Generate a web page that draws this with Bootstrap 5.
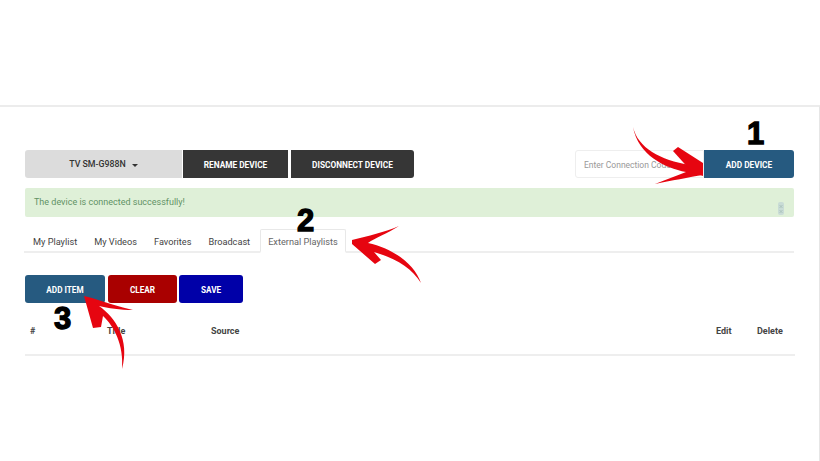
<!DOCTYPE html>
<html lang="en">
<head>
<meta charset="utf-8">
<title>Device playlists</title>
<link href="https://cdn.jsdelivr.net/npm/bootstrap@5.3.0/dist/css/bootstrap.min.css" rel="stylesheet">
<style>
html,body{height:461px;overflow:hidden;background:#fff}
body{font-family:Roboto,"Liberation Sans",sans-serif;font-size:9.5px;color:#444;position:relative}
.panel-wrap{margin-top:105px;height:356px;border-top:2px solid #ececec;border-right:1px solid #e6e6e6;padding:43px 25px 0 25px}
.bar-btn{height:28px;border-radius:0;border:0;font-size:8.3px;font-weight:700;color:#fff;padding:2px 0 0;display:flex;align-items:center;justify-content:center;text-transform:uppercase}
.bar-dev{width:157px;background:#dcdcdc;color:#333;font-size:8.8px;font-weight:500;border-radius:3px 0 0 3px;text-transform:none;margin-right:1px}
.bar-dev::after{content:"";margin-left:6px;border-top:3px solid #333;border-left:3px solid transparent;border-right:3px solid transparent}
.bar-dark{background:#363636}
.bar-ren{width:105px;margin-right:3px}
.bar-dis{width:123px;border-radius:0 3px 3px 0}
.conn-input{width:129px;height:28px;border:1px solid #eee;border-radius:3px 0 0 3px;font-size:8.5px;color:#999;padding:2px 8px 0;display:flex;align-items:center}
.bar-add{width:90px;background:#265a80;border-radius:0 3px 3px 0}
.ok-alert{height:29px;margin-top:10px;background:#dff0d8;color:#5f9265;font-size:9px;padding:0 9px;border:0;border-radius:2px;margin-bottom:0}
.alert-glyph{width:6px;height:13px;margin-top:11px;margin-right:1px}
.tab-row{margin-top:12px;margin-left:-1px;height:24px;border-bottom:2px solid #eee;font-size:9.2px;color:#444}
.tab-item{padding:2px 8px 0 9px;height:24px;display:flex;align-items:center}
.tab-on{color:#666;padding:2px 7px 0;border:1px solid #e8e8e8;border-bottom:2px solid #fff;border-radius:2px 2px 0 0;height:24px;margin-left:2px;background:#fff}
.act-row{margin-top:22px}
.act-btn{height:28px;border-radius:3px;border:0;color:#fff;font-size:8.2px;font-weight:700;padding:2px 0 0;text-transform:uppercase;display:flex;align-items:center;justify-content:center}
.act-add{width:80px;background:#265a80;margin-right:3px}
.act-clear{width:69px;background:#a90000;margin-right:2px}
.act-save{width:64px;background:#0000a8}
.head-row{margin-top:14px;height:39px;width:770px;border-bottom:2px solid #eee;font-size:9px;font-weight:700;color:#444;padding-top:8px}
.hc-num{width:82px;padding-left:5px}
.hc-title{width:104px}
.hc-source{flex:1 1 auto}
.hc-edit{width:41px}
.hc-del{width:38px}
.overlay{position:absolute;left:0;top:0;pointer-events:none}
.digit{position:absolute;font-family:"Liberation Sans",sans-serif;font-weight:700;font-size:31px;line-height:1;color:#000;-webkit-text-stroke:1.3px #000}
.d1{left:747px;top:118px}
.d2{left:297px;top:205px}
.d3{left:54px;top:303px}
</style>
</head>
<body>
<div class="panel-wrap">
  <div class="d-flex justify-content-between">
    <div class="d-flex">
      <div class="bar-btn bar-dev">TV SM-G988N</div>
      <div class="bar-btn bar-dark bar-ren">Rename Device</div>
      <div class="bar-btn bar-dark bar-dis">Disconnect Device</div>
    </div>
    <div class="d-flex">
      <div class="conn-input">Enter Connection Code</div>
      <div class="bar-btn bar-add">Add Device</div>
    </div>
  </div>
  <div class="alert ok-alert d-flex justify-content-between align-items-center">
    <span>The device is connected successfully!</span>
    <svg class="alert-glyph" viewBox="0 0 6 13"><rect width="6" height="13" rx="2" fill="#c9dcd6"/><path d="M1.5 3l3 3M4.5 3l-3 3M1.5 8l3 3M4.5 8l-3 3" stroke="#a3bcb6" stroke-width=".8"/></svg>
  </div>
  <div class="tab-row d-flex">
    <div class="tab-item">My Playlist</div>
    <div class="tab-item">My Videos</div>
    <div class="tab-item">Favorites</div>
    <div class="tab-item">Broadcast</div>
    <div class="tab-item tab-on">External Playlists</div>
  </div>
  <div class="act-row d-flex">
    <div class="act-btn act-add">Add Item</div>
    <div class="act-btn act-clear">Clear</div>
    <div class="act-btn act-save">Save</div>
  </div>
  <div class="head-row d-flex">
    <div class="hc-num">#</div>
    <div class="hc-title">Title</div>
    <div class="hc-source">Source</div>
    <div class="hc-edit">Edit</div>
    <div class="hc-del">Delete</div>
  </div>
</div>
<div class="digit d1">1</div>
<div class="digit d2">2</div>
<div class="digit d3">3</div>
<svg class="overlay" width="820" height="461" viewBox="0 0 820 461">
  <g fill="#e60510">
    <path d="M633 127C638 148 660 160 690 165L703 167L703 175C690 177 670 181 655 184C665 180 676 176 686 172C665 168 638 155 633 127Z"/>
    <path d="M673 151L678 147L703 163L703 176L692 172Z"/>
    <path d="M352 240C368 236 385 232 399 226C388 233 375 238 368 243C395 249 415 265 421 283C412 268 395 258 374 252L381 260L375 264L352 244Z"/>
    <path d="M84 296L92 298C105 302 120 307 133 310C120 310 108 308 99 306C116 318 130 340 122 369C124 345 114 326 103 316L101 327L93 328Z"/>
  </g>
</svg>
</body>
</html>
